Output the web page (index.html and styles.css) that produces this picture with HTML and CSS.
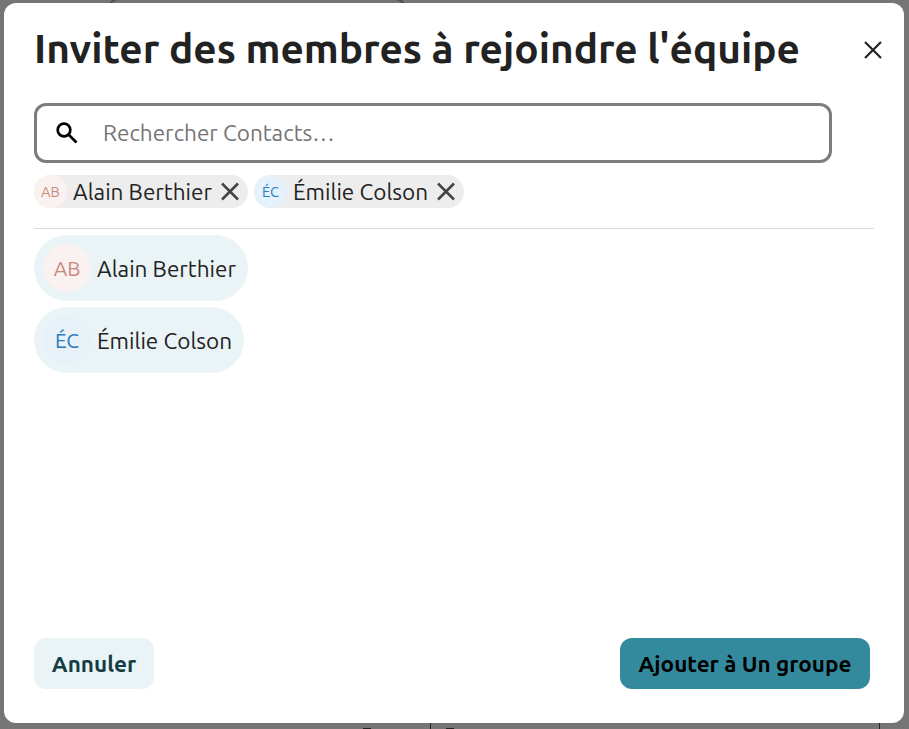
FILE: index.html
```
<!DOCTYPE html>
<html lang="fr">
<head>
    <meta charset="UTF-8">
    <meta name="viewport" content="width=device-width, initial-scale=1.0">
    <title>Inviter des membres</title>
    <link rel="stylesheet" href="styles.css">
</head>
<body>
    <!-- dimmed page behind the dialog -->
    <div class="backdrop">
        <div class="back-search"></div>
        <div class="back-columns"></div>
        <span class="back-mark mark-left"></span>
        <span class="back-mark mark-right"></span>
    </div>

    <div class="modal" role="dialog" aria-labelledby="title">
        <div class="header">
            <h1 id="title">Inviter des membres à rejoindre l'équipe</h1>
            <button class="close" aria-label="Fermer">
                <svg width="20" height="20" viewBox="0 0 20 20"><path d="M2 2L18 18M18 2L2 18"/></svg>
            </button>
        </div>

        <div class="search">
            <svg width="24" height="24" viewBox="0 0 24 24"><circle cx="9" cy="9" r="6.3"/><path d="M13.5 13.5L21.5 21.5"/></svg>
            <input type="text" placeholder="Rechercher Contacts…">
        </div>

        <div class="chips">
            <div class="chip chip-ab">
                <span class="avatar ab">AB</span>
                <span class="name">Alain Berthier</span>
                <svg width="20" height="20" viewBox="0 0 20 20"><path d="M2 1.5L18 17.5M18 1.5L2 17.5"/></svg>
            </div>
            <div class="chip chip-ec">
                <span class="avatar ec">ÉC</span>
                <span class="name">Émilie Colson</span>
                <svg width="20" height="20" viewBox="0 0 20 20"><path d="M2 1.5L18 17.5M18 1.5L2 17.5"/></svg>
            </div>
        </div>

        <div class="results">
            <div class="contact contact-ab">
                <span class="avatar ab">AB</span>
                <span class="name">Alain Berthier</span>
            </div>
            <div class="contact contact-ec">
                <span class="avatar ec">ÉC</span>
                <span class="name">Émilie Colson</span>
            </div>
        </div>

        <div class="footer">
            <button class="btn cancel">Annuler</button>
            <button class="btn submit">Ajouter à Un groupe</button>
        </div>
    </div>
</body>
</html>
```
FILE: styles.css
```
* {
    box-sizing: border-box;
}

body {
    margin: 0;
    height: 100vh;
    padding: 3px 5px 6px 4px;
    overflow: hidden;
    background-color: #757575;
    font-family: Ubuntu, "Noto Sans", sans-serif;
    font-size: 22.5px;
    color: #222;
}

button {
    border: none;
    padding: 0;
    font-family: inherit;
    cursor: pointer;
}

svg {
    display: block;
    flex: none;
    fill: none;
    stroke: #222;
    stroke-width: 2.2;
}

.backdrop {
    position: absolute;
    inset: 0;
    overflow: hidden;
}

.back-search {
    position: absolute;
    left: 107px;
    top: -2px;
    width: 300px;
    height: 60px;
    border: 2px solid #505050;
    border-radius: 12px;
}

.back-columns {
    position: absolute;
    left: 430px;
    bottom: 0;
    width: 450px;
    height: 12px;
    border: solid #222;
    border-width: 0 1px;
}

.back-mark {
    position: absolute;
    bottom: 0;
    width: 8px;
    height: 1px;
    background-color: #222;
}

.mark-left {
    left: 363px;
}

.mark-right {
    left: 446px;
}

.modal {
    position: relative;
    display: flex;
    flex-direction: column;
    height: 720px;
    padding: 0 30px 34px;
    background-color: #fff;
    border-radius: 12px;
}

.header {
    display: flex;
    align-items: center;
    justify-content: space-between;
    height: 94px;
    margin-right: -9px;
}

h1 {
    margin: 0;
    font-size: 40.6px;
    font-weight: 600;
    line-height: 90px;
    padding-bottom: 4px;
    white-space: nowrap;
}

.close {
    background: none;
}

.search {
    display: flex;
    align-items: center;
    width: 798px;
    height: 60px;
    margin-top: 6px;
    padding-left: 18px;
    border: 3px solid #7d7d7d;
    border-radius: 12px;
}

.search svg {
    stroke: #000;
    stroke-width: 2.7;
}

.search input {
    flex: 1;
    margin-left: 24px;
    padding: 0 0 2px;
    border: none;
    outline: none;
    font: inherit;
}

.search input::placeholder {
    color: #757575;
    opacity: 1;
}

.chips {
    display: flex;
    gap: 6px;
    height: 66px;
    padding-top: 12px;
    border-bottom: 1px solid #dbdbdb;
}

.chip {
    display: flex;
    align-items: center;
    height: 33px;
    background-color: #ededed;
    border-radius: 17px;
}

.chip-ab {
    width: 214px;
}

.chip-ec {
    width: 210px;
}

.chip svg {
    margin-left: auto;
    margin-right: 8px;
    stroke: #444;
    stroke-width: 2.5;
}

.avatar {
    display: flex;
    flex: none;
    align-items: center;
    justify-content: center;
    width: 33px;
    height: 33px;
    margin-right: 6px;
    border-radius: 50%;
    font-size: 14.6px;
}

.ab {
    color: #c98a7e;
    background-color: #f9f2f0;
}

.ec {
    color: #2a7bc0;
    background-color: #e5f1fb;
}

.name {
    white-space: nowrap;
}

.results {
    display: flex;
    flex: 1;
    flex-direction: column;
    gap: 6px;
    padding-top: 6px;
}

.contact {
    display: flex;
    align-items: center;
    height: 66px;
    padding-left: 9px;
    background-color: #eaf3f6;
    border-radius: 33px;
}

.contact-ab {
    width: 214px;
}

.contact-ec {
    width: 210px;
}

.contact .avatar {
    width: 48px;
    height: 48px;
    font-size: 20.8px;
}

.contact .ec {
    background-color: #e8f1f8;
}

.footer {
    display: flex;
    justify-content: space-between;
    margin-right: 4px;
}

.btn {
    height: 51px;
    border-radius: 12px;
    font-size: 22.5px;
    font-weight: 600;
    white-space: nowrap;
}

.cancel {
    width: 120px;
    color: #143c44;
    background-color: #eaf3f6;
}

.submit {
    width: 250px;
    color: #000;
    background-color: #338a9d;
}
```
